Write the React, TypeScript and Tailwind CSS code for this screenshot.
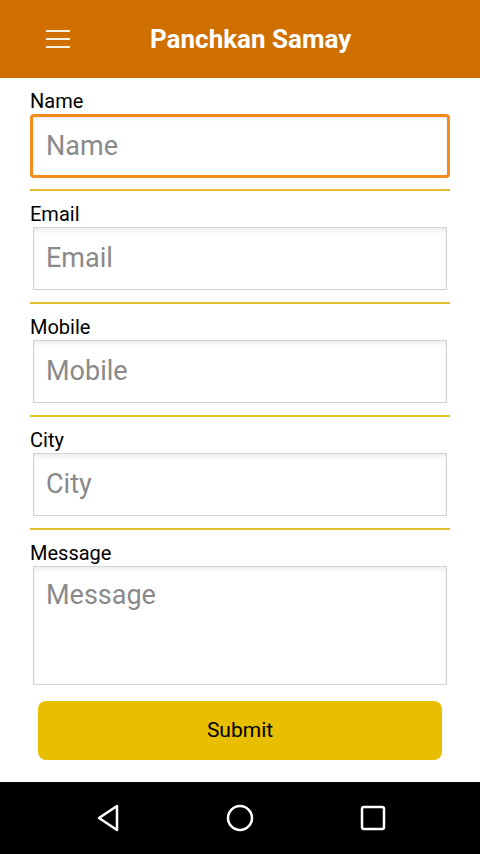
import React from "react";

const FIELDS = ["Email", "Mobile", "City"];

function Divider() {
  return <div className="mx-[30px] h-[2px] bg-[#e2c12a]" />;
}

function Label({ text }: { text: string }) {
  return <div className="px-[30px] text-[20px] leading-[20px] text-black">{text}</div>;
}

export default function App() {
  return (
    <div className="flex h-[854px] w-[480px] flex-col bg-white font-['Roboto',sans-serif]">
      <header className="flex h-[78px] shrink-0 items-center bg-[#cf6f00]">
        <div className="ml-[46px] flex w-[24px] flex-col gap-[6px]">
          <span className="h-[2px] bg-[#fdf2e0]" />
          <span className="h-[2px] bg-[#fdf2e0]" />
          <span className="h-[2px] bg-[#fdf2e0]" />
        </div>
        <h1 className="ml-[80px] text-[26px] font-bold text-white">Panchkan Samay</h1>
      </header>

      <main className="flex flex-1 flex-col pt-[13px]">
        <Label text="Name" />
        <div className="mx-[30px] mt-[3px] flex h-[64px] items-center rounded-[4px] border-[3px] border-[#f28a1c] bg-white px-[13px] shadow-[inset_0_2px_3px_rgba(0,0,0,0.08)]">
          <span className="text-[27px] text-[#8a8a8a]">Name</span>
        </div>
        <div className="mt-[11px]" />
        <Divider />

        {FIELDS.map((f) => (
          <div key={f} className="flex flex-col">
            <div className="mt-[13px]" />
            <Label text={f} />
            <div className="mx-[33px] mt-[3px] flex h-[63px] items-center border border-[#d2d2d2] bg-white px-[12px] shadow-[inset_0_3px_4px_rgba(0,0,0,0.07)]">
              <span className="text-[27px] text-[#8a8a8a]">{f}</span>
            </div>
            <div className="mt-[12px]" />
            <Divider />
          </div>
        ))}

        <div className="mt-[13px]" />
        <Label text="Message" />
        <div className="mx-[33px] mt-[3px] h-[119px] border border-[#d2d2d2] bg-white px-[12px] pt-[12px] shadow-[inset_0_3px_4px_rgba(0,0,0,0.07)]">
          <div className="text-[27px] leading-[32px] text-[#8a8a8a]">Message</div>
        </div>

        <button className="mx-[38px] mt-[16px] flex h-[59px] items-center justify-center rounded-[8px] bg-[#e8be00] text-[21px] text-black">
          Submit
        </button>
      </main>

      <nav className="flex h-[72px] shrink-0 items-center justify-center gap-[105px] bg-black">
        <svg width="28" height="30" viewBox="0 0 28 30" fill="none">
          <path d="M24 3 L6 15 L24 27 Z" stroke="white" strokeWidth="2.5" strokeLinejoin="round" />
        </svg>
        <svg width="28" height="28" viewBox="0 0 28 28" fill="none">
          <circle cx="14" cy="14" r="12" stroke="white" strokeWidth="2.5" />
        </svg>
        <svg width="28" height="28" viewBox="0 0 28 28" fill="none">
          <rect x="3" y="3" width="22" height="22" rx="2" stroke="white" strokeWidth="2.5" />
        </svg>
      </nav>
    </div>
  );
}
